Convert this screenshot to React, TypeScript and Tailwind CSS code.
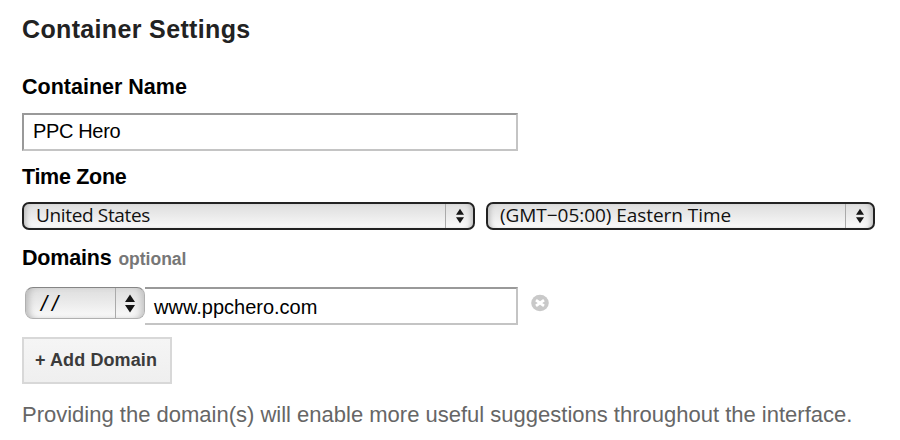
import type { ReactNode } from "react";

function Arrows({ className }: { className: string }) {
  return (
    <svg viewBox="0 0 10 18" className={className} fill="#151515">
      <path d="M5 0 10 7.5H0ZM5 18 0 10.5H10Z" />
    </svg>
  );
}

function Label({ children, className = "" }: { children: ReactNode; className?: string }) {
  return (
    <div className={`flex h-[26px] items-center whitespace-nowrap pt-[2px] text-[21.5px] font-bold leading-none text-black ${className}`}>
      {children}
    </div>
  );
}

function TimeSelect({ className, textClass, text }: { className: string; textClass: string; text: string }) {
  return (
    <button
      className={`flex h-[28px] items-stretch rounded-[7px] border-2 border-[#222] bg-linear-to-b from-[#dedede] via-[#ebebeb] to-[#fafafa] shadow-[inset_5px_0_5px_-3px_#bbb,inset_-5px_0_5px_-3px_#bbb] ${className}`}
    >
      <span className={`flex flex-1 items-center whitespace-nowrap pb-[2px] pl-[12px] font-['Open_Sans',sans-serif] text-[19px] leading-none text-[#111] ${textClass}`}>
        {text}
      </span>
      <span className="flex w-[28px] items-center justify-center border-l border-[#aaa]">
        <Arrows className="h-[16px] w-[8px]" />
      </span>
    </button>
  );
}

export default function App() {
  return (
    <main className="flex h-[440px] w-[900px] flex-col items-start overflow-hidden bg-white pl-[22px] pt-[14px] font-['Liberation_Sans',Arial,sans-serif]">
      <h1 className="h-[30px] whitespace-nowrap text-[25px] font-bold leading-[30px] tracking-[0.35px] text-[#222]">
        Container Settings
      </h1>
      <div className="mt-[30px]">
        <Label>Container Name</Label>
      </div>
      <div className="mt-[13px] flex h-[38px] w-[496px] items-center border-2 border-[#c4c4c4] border-l-[#999] border-t-[#999] pb-[2px] pl-[9px] text-[20px] tracking-[-0.35px] text-black">
        <span>PPC Hero</span>
      </div>
      <div className="mt-[13px]">
        <Label className="tracking-[-0.3px]">Time Zone</Label>
      </div>
      <div className="mt-[12px] flex gap-[11px]">
        <TimeSelect className="w-[453px]" textClass="tracking-[-0.35px]" text="United States" />
        <TimeSelect className="w-[389px]" textClass="tracking-[-0.05px]" text="(GMT−05:00) Eastern Time" />
      </div>
      <div className="mt-[15px] flex items-center gap-[7px]">
        <Label className="tracking-[-0.2px]">Domains</Label>
        <span className="pt-[4px] text-[17.5px] font-bold leading-none text-[#777]">optional</span>
      </div>
      <div className="mt-[16px] flex items-start pl-[3px]">
        <button className="flex h-[32px] w-[120px] items-stretch rounded-[8px] border border-[#b0b0b0] border-t-[#858585] bg-linear-to-b from-[#dedede] via-[#ebebeb] to-[#fafafa] shadow-[inset_6px_0_6px_-3px_#bbb,inset_-6px_0_6px_-3px_#c4c4c4]">
          <span className="flex flex-1 items-center pl-[15px] pt-px font-['Liberation_Sans',Arial,sans-serif] text-[22px] italic leading-none tracking-[5px] text-black">//</span>
          <span className="flex w-[29px] items-center justify-center border-l border-[#aaa]">
            <Arrows className="h-[19px] w-[10px]" />
          </span>
        </button>
        <div className="flex h-[38px] w-[373px] items-center border-y-2 border-r-2 border-[#c4c4c4] border-t-[#999] pl-[9px] pt-[2px] text-[20px] text-black">
          <span>www.ppchero.com</span>
        </div>
        <svg viewBox="0 0 18 18" className="ml-[13px] mt-[7px] size-[18px]">
          <ellipse cx="9" cy="9" rx="8.8" ry="8.2" fill="#c9c9c9" />
          <path d="m5 6.2 8 5.6M13 6.2l-8 5.6" stroke="#fff" strokeWidth="2.8" />
        </svg>
      </div>
      <button className="mt-[12px] flex h-[47px] w-[150px] items-center justify-center whitespace-nowrap border-2 border-[#d8d8d8] bg-linear-to-b from-[#f5f5f5] to-[#efefef] pr-[2px] text-[18px] font-bold tracking-[0.1px] text-[#3b3b3b]">
        <span>+ Add Domain</span>
      </button>
      <p className="mt-[18px] h-[26px] whitespace-nowrap text-[22px] leading-[26px] text-[#666]">
        Providing the domain(s) will enable more useful suggestions throughout the interface.
      </p>
    </main>
  );
}
